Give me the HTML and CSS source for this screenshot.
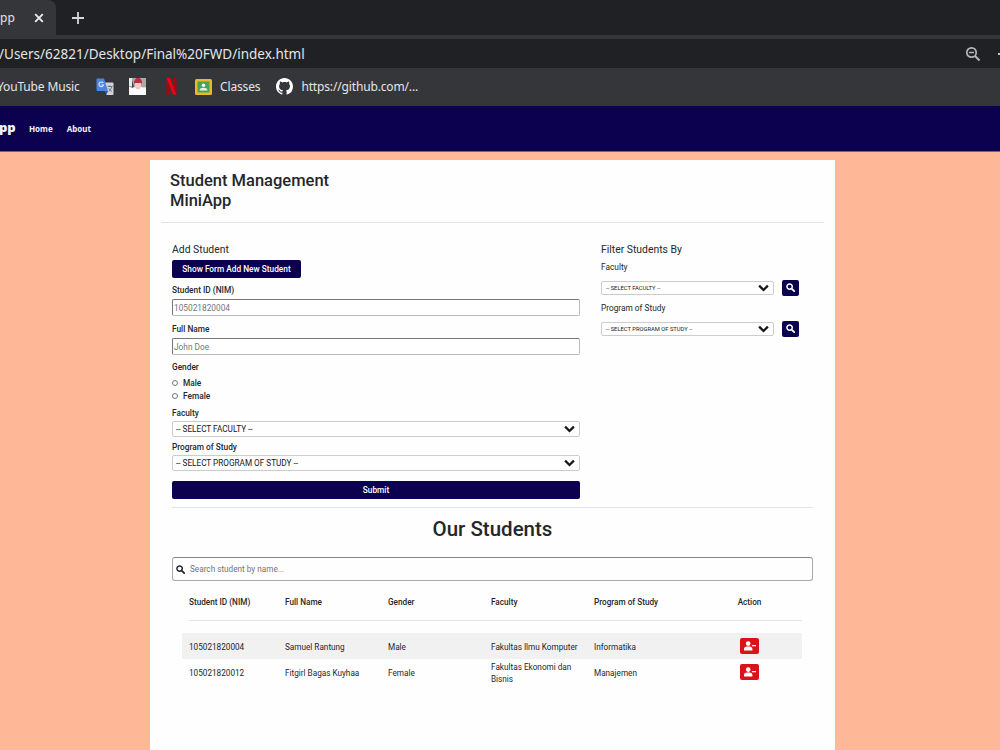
FILE: index.html
```html
<!doctype html>
<html lang="en">
<head>
<meta charset="utf-8">
<title>Student Management MiniApp</title>
<link rel="stylesheet" href="styles.css">
</head>
<body>
<svg class="defs" width="0" height="0">
	<symbol id="search" viewBox="0 0 16 16"><circle cx="6.4" cy="6.4" r="4.8" fill="none" stroke="currentColor" stroke-width="2.6"/><path d="M10 10l4.6 4.6" stroke="currentColor" stroke-width="3.2" stroke-linecap="round"/></symbol>
	<symbol id="down" viewBox="0 0 10 7"><path d="M1 1.3l4 4 4-4" fill="none" stroke="currentColor" stroke-width="2.1"/></symbol>
	<symbol id="user-minus" viewBox="0 0 12 10"><circle cx="4.2" cy="2.6" r="2.3" fill="currentColor"/><path d="M0 9.4V8c0-1.600 1.200-2.600 2.800-2.600h2.800C7.200 5.400 8.400 6.400 8.400 8v1.400zM7.900 3.900H12v1.300H7.900z" fill="currentColor"/></symbol>
</svg>
<div class="browser">
	<div class="tabs">
		<div class="tab">
			<span>pp</span>
			<svg width="10" height="10" viewBox="0 0 10 10"><path d="M1.200 1.200l7.600 7.600M8.800 1.200l-7.600 7.600" stroke="#e8eaed" stroke-width="1.900"/></svg>
		</div>
		<svg class="new-tab" width="14" height="14" viewBox="0 0 14 14"><path d="M7 1v12M1 7h12" stroke="#d5d7da" stroke-width="1.800"/></svg>
	</div>
	<div class="address">
		<span class="url">/Users/62821/Desktop/Final%20FWD/index.html</span>
		<svg width="16" height="16" viewBox="0 0 16 16" fill="none" stroke="#b4b6ba"><circle cx="6.500" cy="6.500" r="4.700" stroke-width="1.700"/><path d="M10 10l4.500 4.500" stroke-width="2"/><path d="M4 6.500h5" stroke-width="1.500"/></svg>
		<i class="star"></i>
	</div>
	<div class="bookmarks">
		<span class="bm-music">YouTube Music</span>
		<svg class="bm-translate" width="18" height="18" viewBox="0 0 18 18"><path d="M8 4.500h8.500q1 0 1 1v10.500q0 1-1 1H10.500z" fill="#ced3dc"/><path d="M1.500.500H8l4 12.500H1.500q-1 0-1-1v-10.500q0-1 1-1z" fill="#4c86e0"/><path d="M8.500 13H12l-1.500 3.500z" fill="#3059b0"/><path d="M7.200 5A2.300 2.300 0 1 0 7.500 7H5.300" fill="none" stroke="#d9e6fb" stroke-width="1.100"/><path d="M11.500 8.500h5M14 7.300v1.200M15.800 8.500c-.5 2.500-1.800 4-3.200 5M12.700 10.200c.7 1.500 1.900 2.600 3.300 3.400" fill="none" stroke="#68727f" stroke-width=".9"/></svg>
		<svg class="bm-photo" width="17" height="17" viewBox="0 0 17 17"><path d="M0 0h17v17H0z" fill="#f3f0f1"/><path d="M0 0h17v9l-4 2H4L0 9z" fill="#a9aaa0"/><path d="M0 0h3v8H0z" fill="#e8eae9"/><path d="M3 2l2 7-2 1z" fill="#35435a"/><path d="M5 5c0-7 8-7 8 0l-1 1H6z" fill="#b82e42"/><path d="M6 5h6v4L9 11.500 6 9z" fill="#eecbc4"/><path d="M0 9l3 1 3-1 3 3 3-3 5 1v7H0z" fill="#fafafa"/></svg>
		<svg class="bm-netflix" width="11" height="17" viewBox="0 0 11 17"><path d="M.500 0H4v16.500L.500 17z" fill="#a5060f"/><path d="M7 0h3.500v17L7 16.500z" fill="#a5060f"/><path d="M.500 0H4l6.500 17L7 16.500z" fill="#e30914"/></svg>
		<svg class="bm-classes" width="17" height="16" viewBox="0 0 17 16"><rect width="17" height="16" rx="1.500" fill="#e9b92b"/><path d="M2.500 2.500h12v11h-12z" fill="#4da05c"/><circle cx="8.500" cy="6.200" r="1.800" fill="#fff"/><path d="M4.500 11.500c0-2 2-2.700 4-2.700s4 .7 4 2.700z" fill="#e4f4e8"/></svg>
		<span class="bm-label">Classes</span>
		<svg class="bm-github" width="17" height="17" viewBox="0 0 16 16" fill="#fff"><path fill-rule="evenodd" d="M8 0C3.580 0 0 3.580 0 8c0 3.540 2.290 6.530 5.470 7.590.4.070.55-.17.55-.38 0-.19-.01-.82-.01-1.490-2.010.37-2.530-.49-2.690-.94-.09-.23-.48-.94-.82-1.130-.28-.15-.68-.52-.01-.53.63-.01 1.080.58 1.230.82.72 1.210 1.870.87 2.330.66.07-.52.28-.87.51-1.070-1.780-.2-3.640-.89-3.640-3.950 0-.87.31-1.590.82-2.150-.08-.2-.36-1.020.08-2.120 0 0 .67-.21 2.200.82.64-.18 1.320-.27 2-.27s1.360.09 2 .27c1.530-1.040 2.200-.82 2.200-.82.44 1.100.16 1.920.08 2.120.51.56.82 1.270.82 2.150 0 3.070-1.870 3.750-3.650 3.950.29.25.54.73.54 1.480 0 1.070-.01 1.930-.01 2.200 0 .21.15.46.55.38A8.010 8.010 0 0 0 16 8c0-4.420-3.580-8-8-8z"/></svg>
		<span class="bm-label">https://github.com/...</span>
	</div>
</div>
<nav class="navbar">
	<b class="brand">pp</b>
	<a>Home</a>
	<a>About</a>
</nav>
<main class="card">
	<h1>Student Management<br>MiniApp</h1>
	<div class="columns">
		<form class="add">
			<h2>Add Student</h2>
			<button type="button" class="btn show-form">Show Form Add New Student</button>
			<label class="l-nim">Student ID (NIM)</label>
			<input type="text" placeholder="105021820004">
			<label class="l-name">Full Name</label>
			<input type="text" placeholder="John Doe">
			<label class="l-gender">Gender</label>
			<div class="radio"><i></i>Male</div>
			<div class="radio"><i></i>Female</div>
			<label class="l-faculty">Faculty</label>
			<div class="select"><span>-- SELECT FACULTY --</span><svg width="11" height="8"><use href="#down"/></svg></div>
			<label class="l-program">Program of Study</label>
			<div class="select"><span>-- SELECT PROGRAM OF STUDY --</span><svg width="11" height="8"><use href="#down"/></svg></div>
			<button type="button" class="btn submit">Submit</button>
		</form>
		<div class="filter">
			<h2>Filter Students By</h2>
			<label class="f-faculty">Faculty</label>
			<div class="filter-row">
				<div class="select"><span>-- SELECT FACULTY --</span><svg width="11" height="8"><use href="#down"/></svg></div>
				<button type="button" class="btn find"><svg width="9" height="9"><use href="#search"/></svg></button>
			</div>
			<label class="f-program">Program of Study</label>
			<div class="filter-row">
				<div class="select"><span>-- SELECT PROGRAM OF STUDY --</span><svg width="11" height="8"><use href="#down"/></svg></div>
				<button type="button" class="btn find"><svg width="9" height="9"><use href="#search"/></svg></button>
			</div>
		</div>
	</div>
	<section class="students">
		<h3>Our Students</h3>
		<div class="search">
			<svg width="9" height="9"><use href="#search"/></svg>
			<input type="text" placeholder="Search student by name...">
		</div>
		<div class="table">
			<div class="row head">
				<span>Student ID (NIM)</span><span>Full Name</span><span>Gender</span><span>Faculty</span><span>Program of Study</span><span class="action">Action</span>
			</div>
			<div class="row odd">
				<span>105021820004</span><span>Samuel Rantung</span><span>Male</span><span>Fakultas Ilmu Komputer</span><span>Informatika</span>
				<span class="action"><button type="button" class="delete"><svg width="12" height="10"><use href="#user-minus"/></svg></button></span>
			</div>
			<div class="row">
				<span>105021820012</span><span>Fitgirl Bagas Kuyhaa</span><span>Female</span><span>Fakultas Ekonomi dan<br>Bisnis</span><span>Manajemen</span>
				<span class="action"><button type="button" class="delete"><svg width="12" height="10"><use href="#user-minus"/></svg></button></span>
			</div>
		</div>
	</section>
</main>
</body>
</html>
```
FILE: styles.css
```css
* {
	box-sizing: border-box;
}
html,
body {
	margin: 0;
	height: 100%;
	overflow: hidden;
}
body {
	display: flex;
	flex-direction: column;
	background: #ffb897;
	font-family: Roboto, sans-serif;
	font-size: 8px;
	color: #24272b;
}
.defs {
	position: absolute;
}
svg {
	display: block;
	flex: none;
}
h1,
h2,
h3 {
	margin: 0;
	font-weight: 500;
}
input,
button {
	font-family: inherit;
}

/* browser */
.browser {
	flex: none;
	height: 106px;
	background: #35363a;
	font-family: "Noto Sans", sans-serif;
	color: #e4e5e7;
	white-space: nowrap;
}
.tabs {
	display: flex;
	align-items: center;
	height: 35px;
	background: #202124;
}
.tab {
	display: flex;
	align-items: center;
	gap: 19px;
	width: 56px;
	height: 35px;
	background: #35363a;
	border-top-right-radius: 8px;
	font-size: 12px;
}
.new-tab {
	margin-left: 15px;
}
.address {
	display: flex;
	align-items: center;
	height: 29px;
	margin-top: 4px;
	background: #202124;
	font-size: 13.500px;
}
.url {
	width: 966px;
	margin-left: -1px;
}
.star {
	width: 2px;
	height: 2px;
	margin-left: 17px;
	background: #c4c6c9;
}
.bookmarks {
	display: flex;
	align-items: center;
	height: 37px;
	font-size: 12px;
	letter-spacing: -.15px;
}
.bm-music {
	width: 84px;
	margin-left: -3px;
}
.bm-translate {
	margin-left: 15px;
}
.bm-photo {
	margin-left: 15px;
}
.bm-netflix {
	margin-left: 20px;
}
.bm-classes {
	margin-left: 18px;
}
.bm-label {
	margin-left: 8px;
}
.bm-github {
	margin-left: 16px;
}

/* navbar */
.navbar {
	display: flex;
	align-items: center;
	flex: none;
	height: 46px;
	background: #0b014f;
	border-bottom: 1px solid #8d5a72;
	font-family: "Noto Sans", sans-serif;
	font-size: 8px;
	font-weight: bold;
	color: #f4f2fb;
}
.brand {
	width: 30px;
	margin-left: -1px;
	padding-bottom: 3px;
	font-size: 13px;
}
.navbar a {
	margin-right: 14px;
}

/* card */
.card {
	flex: 1;
	width: 685px;
	margin: 8px 0 0 150px;
	padding: 11px 11px 0 11px;
	background: #fefefe;
}
h1 {
	height: 52px;
	padding-left: 9px;
	border-bottom: 1px solid #e2e3e4;
	font-size: 16.500px;
	line-height: 20px;
}
.columns {
	display: flex;
	width: 641px;
	height: 285px;
	margin-left: 11px;
	padding-top: 19px;
	border-bottom: 1px solid #e2e3e4;
}
h2 {
	font-size: 10.400px;
	font-weight: 400;
	line-height: 15px;
}
label {
	display: block;
	font-size: 8.300px;
	line-height: 10px;
}
.add {
	width: 408px;
}
.add label {
	font-weight: 500;
}
.btn {
	display: block;
	padding: 0;
	border: 0;
	border-radius: 2px;
	background: #0b014f;
	color: #fff;
	font-size: 8.300px;
	font-weight: 500;
}
.show-form {
	width: 129px;
	height: 18px;
	margin-top: 3px;
}
.add input {
	display: block;
	width: 408px;
	height: 17px;
	padding: 0 1px;
	border: 1px solid #bbb;
	border-top-color: #777;
	border-left-color: #777;
	border-radius: 2px;
	font-size: 8.300px;
}
input::placeholder {
	color: #757575;
}
.add .l-nim {
	margin: 7px 0 4px;
}
.add .l-name {
	margin: 8px 0 4px;
}
.add .l-gender {
	margin: 7px 0 4px;
}
.radio {
	display: flex;
	align-items: center;
	height: 13px;
	font-size: 8.300px;
	font-weight: 500;
}
.radio i {
	width: 6px;
	height: 6px;
	margin: 1px 5px 0 0;
	border: 1px solid #777;
	border-radius: 50%;
}
.add .l-faculty {
	margin: 6px 0 3px;
}
.add .l-program {
	margin: 5px 0 3px;
}
.select {
	display: flex;
	align-items: center;
	justify-content: space-between;
	width: 408px;
	height: 16px;
	padding: 0 4px 0 3px;
	border: 1px solid #ccc;
	border-radius: 2px;
	color: #16181b;
	font-size: 8.200px;
	white-space: nowrap;
}
.submit {
	width: 408px;
	height: 18px;
	margin-top: 10px;
}
.filter {
	margin-left: 21px;
}
.filter .f-faculty {
	margin: 5px 0 7px;
}
.filter .f-program {
	margin: 7px 0 7px;
}
.filter-row {
	display: flex;
	align-items: center;
	gap: 8px;
	height: 17px;
}
.filter .select {
	width: 173px;
	height: 14px;
	padding-left: 4px;
	font-size: 5.800px;
}
.find {
	display: flex;
	align-items: center;
	justify-content: center;
	width: 17px;
	height: 16px;
}

/* students */
.students {
	width: 641px;
	margin-left: 11px;
}
h3 {
	height: 49px;
	padding-top: 9px;
	font-size: 20.500px;
	line-height: 24px;
	text-align: center;
}
.search {
	display: flex;
	align-items: center;
	height: 24px;
	padding-left: 3px;
	border: 1px solid #aaa;
	border-top-color: #888;
	border-radius: 3px;
}
.search input {
	flex: 1;
	padding: 0 5px;
	border: 0;
	background: none;
	font-size: 8.200px;
}
.table {
	width: 620px;
	margin-left: 10px;
}
.row {
	display: grid;
	grid-template-columns: 96px repeat(4, 103px) 1fr;
	align-items: center;
	height: 26px;
	padding-left: 7px;
	font-size: 8.200px;
	line-height: 12px;
	white-space: nowrap;
}
.row.head {
	height: 40px;
	margin: 0 0 12px 7px;
	padding: 2px 0 0;
	border-bottom: 1px solid #e2e3e4;
	font-weight: 500;
}
.row span {
	padding-top: 1px;
}
.odd {
	background: #f1f1f1;
}
.row .action {
	display: flex;
	justify-content: center;
	padding-top: 0;
}
.delete {
	display: flex;
	align-items: center;
	justify-content: center;
	width: 19px;
	height: 16px;
	padding: 0;
	border: 0;
	border-radius: 2px;
	background: #dc1219;
	color: #fff;
}
```
